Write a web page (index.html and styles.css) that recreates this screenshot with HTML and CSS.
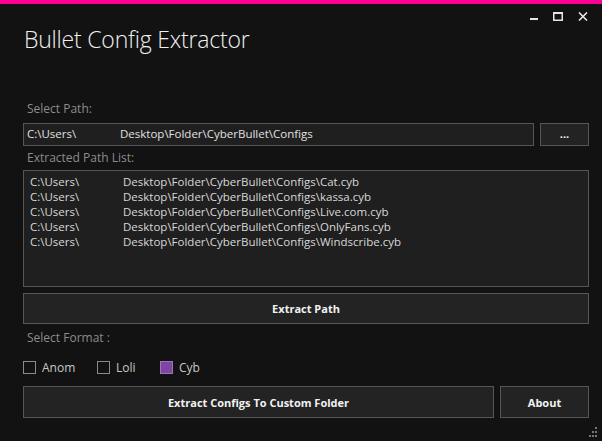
FILE: index.html
```html
<!DOCTYPE html>
<html lang="en">
<head>
    <meta charset="UTF-8">
    <meta name="viewport" content="width=device-width, initial-scale=1.0">
    <title>Bullet Config Extractor</title>
    <link rel="stylesheet" href="styles.css">
</head>
<body>

    <!-- Accent strip -->
    <div class="accent"></div>

    <!-- Title bar -->
    <header class="titlebar">
        <h1 class="title">Bullet Config Extractor</h1>
        <div class="window-controls">
            <svg width="8" height="8" viewBox="0 0 8 8"><rect x="0" y="5" width="8" height="2" fill="#e6e6e6"/></svg>
            <svg width="10" height="9" viewBox="0 0 10 9"><rect x="0.75" y="0.75" width="8.5" height="7.5" fill="none" stroke="#e6e6e6" stroke-width="1.5"/><rect x="0" y="0" width="10" height="2" fill="#e6e6e6"/></svg>
            <svg width="10" height="9" viewBox="0 0 10 9"><path d="M1 0.5 L9 8.5 M9 0.5 L1 8.5" stroke="#e6e6e6" stroke-width="1.6"/></svg>
        </div>
    </header>

    <main class="content">
        <div class="label">Select Path:</div>
        <div class="path-row">
            <div class="textbox"><span class="user">C:\Users\</span>Desktop\Folder\CyberBullet\Configs</div>
            <button class="btn btn-browse">...</button>
        </div>

        <div class="label label-list">Extracted Path List:</div>
        <div class="listbox">
            <div class="list-item"><span class="user">C:\Users\</span>Desktop\Folder\CyberBullet\Configs\Cat.cyb</div>
            <div class="list-item"><span class="user">C:\Users\</span>Desktop\Folder\CyberBullet\Configs\kassa.cyb</div>
            <div class="list-item"><span class="user">C:\Users\</span>Desktop\Folder\CyberBullet\Configs\Live.com.cyb</div>
            <div class="list-item"><span class="user">C:\Users\</span>Desktop\Folder\CyberBullet\Configs\OnlyFans.cyb</div>
            <div class="list-item"><span class="user">C:\Users\</span>Desktop\Folder\CyberBullet\Configs\Windscribe.cyb</div>
        </div>

        <button class="btn btn-wide">Extract Path</button>

        <div class="label label-format">Select Format :</div>
        <div class="formats">
            <label class="check"><span class="box"></span>Anom</label>
            <label class="check"><span class="box"></span>Loli</label>
            <label class="check"><span class="box checked"></span>Cyb</label>
        </div>

        <div class="bottom-row">
            <button class="btn btn-extract">Extract Configs To Custom Folder</button>
            <button class="btn btn-about">About</button>
        </div>
    </main>

    <!-- Resize grip -->
    <svg class="grip" width="10" height="11" viewBox="0 0 10 11">
        <rect x="7" y="0" width="2" height="2" fill="#777"/>
        <rect x="4" y="4" width="2" height="2" fill="#777"/>
        <rect x="7" y="4" width="2" height="2" fill="#777"/>
        <rect x="1" y="8" width="2" height="2" fill="#777"/>
        <rect x="4" y="8" width="2" height="2" fill="#777"/>
        <rect x="7" y="8" width="2" height="2" fill="#777"/>
    </svg>

</body>
</html>
```

FILE: styles.css
```css
/* General Styles */
body {
    margin: 0;
    padding: 0;
    width: 602px;
    height: 441px;
    overflow: hidden;
    position: relative;
    background-color: #121212;
    color: #d6d6d6;
    font-family: "Open Sans", "Noto Sans", sans-serif;
}

/* Accent strip */
.accent {
    height: 4px;
    background-color: #ff0094;
}

/* Title bar */
.titlebar {
    display: flex;
    justify-content: space-between;
    align-items: flex-start;
    padding: 0 14px 0 24px;
    height: 96px;
}

.title {
    margin: 19px 0 0;
    font-size: 23px;
    font-weight: 300;
    color: #f0f0f0;
    letter-spacing: -0.2px;
}

.window-controls {
    display: flex;
    align-items: flex-end;
    gap: 15px;
    margin-top: 8px;
}

/* Content */
.content {
    padding: 0 13px 0 23px;
}

.label {
    font-size: 12px;
    color: #8c8c8c;
    padding-left: 4px;
    height: 23px;
    line-height: 18px;
}

.label-list {
    height: 20px;
    line-height: 16px;
    margin-top: 4px;
}

.label-format {
    margin-top: 6px;
    height: 30px;
    line-height: 16px;
}

.path-row {
    display: flex;
    gap: 6px;
}

.textbox {
    flex: 1;
    height: 21px;
    line-height: 20px;
    border: 1px solid #555;
    background-color: #1f1f1f;
    font-size: 11.5px;
    color: #e0e0e0;
    padding-left: 3px;
    white-space: nowrap;
}

.user {
    display: inline-block;
    width: 93px;
}

.listbox {
    border: 1px solid #555;
    background-color: #1f1f1f;
    padding: 3px 0 0 6px;
    box-sizing: border-box;
    height: 117px;
}

.list-item {
    font-size: 11.5px;
    line-height: 15px;
    color: #d8d8d8;
    white-space: nowrap;
}

/* Buttons */
.btn {
    font-family: "Open Sans", "Noto Sans", sans-serif;
    font-weight: 700;
    font-size: 11px;
    color: #f2f2f2;
    background-color: #232323;
    border: 1px solid #565656;
    padding: 0;
    cursor: pointer;
}

.btn-browse {
    width: 49px;
    height: 23px;
    line-height: 12px;
    padding-bottom: 2px;
}

.btn-wide {
    display: block;
    width: 100%;
    height: 31px;
    margin-top: 6px;
}

/* Checkboxes */
.formats {
    display: flex;
    height: 26px;
}

.check {
    display: flex;
    align-items: center;
    height: 14px;
    font-size: 12px;
    color: #c8c8c8;
}

.check:nth-child(1) {
    width: 74px;
}

.check:nth-child(2) {
    width: 63px;
}

.box {
    width: 11px;
    height: 11px;
    border: 1px solid #8a8a8a;
    margin-right: 6px;
}

.box.checked {
    background-color: #7f45a6;
    border-color: #9a7aae;
}

.bottom-row {
    display: flex;
    gap: 6px;
}

.btn-extract {
    flex: 1;
    height: 32px;
}

.btn-about {
    width: 89px;
    height: 32px;
}

/* Resize grip */
.grip {
    position: absolute;
    right: 4px;
    bottom: 3px;
}
```
